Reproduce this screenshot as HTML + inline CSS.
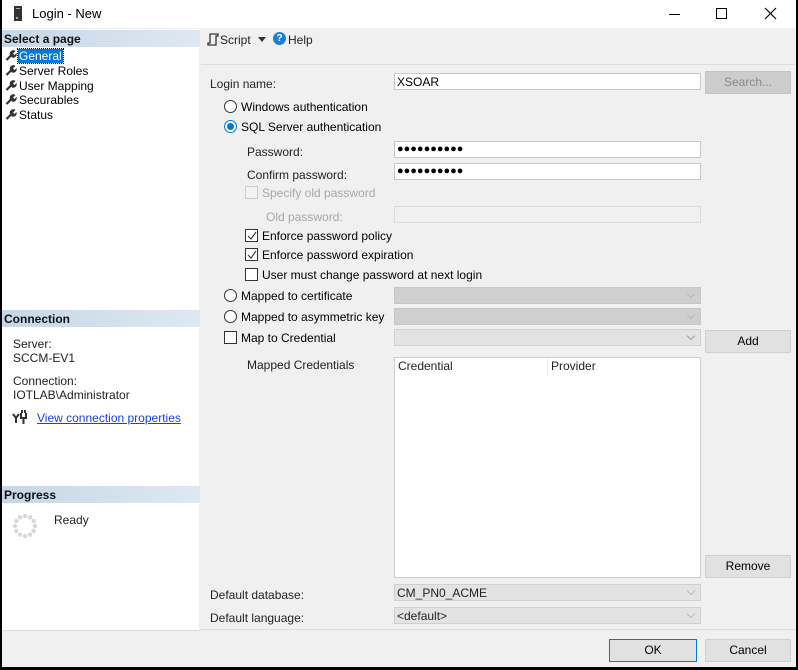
<!DOCTYPE html>
<html><head><meta charset="utf-8">
<style>
*{margin:0;padding:0;box-sizing:border-box}
body{width:798px;height:670px;background:#000;font-family:"Liberation Sans",Arial,sans-serif;font-size:12px;color:#000;position:relative;overflow:hidden}
.a{position:absolute}
#win{left:2px;top:0;width:794px;height:667px;background:#f0f0f0}
.hdr{position:absolute;left:0;width:198px;height:17px;background:linear-gradient(to right,#c7d6e6,#dfe8f2);font-weight:bold;font-size:12px;padding:2px 2px;color:#111}
.t{position:absolute;white-space:nowrap}
.inp{position:absolute;background:#fff;border:1px solid #c8c8c8;height:17px}
.dis{position:absolute;background:#f0f0f0;border:1px solid #dcdcdc;height:17px}
.cmb{position:absolute;background:#cfcfcf;border:1px solid #c6c6c6;height:17px}
.cmb2{position:absolute;background:#e3e3e3;border:1px solid #d0d0d0;height:17px}
.chev{position:absolute;right:6px;top:3px;width:6px;height:6px;border-right:1px solid #a0a0a0;border-bottom:1px solid #a0a0a0;transform:rotate(45deg)}
.btn{position:absolute;background:#e1e1e1;border:1px solid #d0d0d0;text-align:center;line-height:21px;height:23px}
.rad{position:absolute;width:13px;height:13px;border:1px solid #333;border-radius:50%;background:#fff}
.chk{position:absolute;width:13px;height:13px;border:1px solid #333;background:#fff}
.dots{letter-spacing:0px;font-size:11px}
</style></head><body>
<div id="win" class="a">
  <div class="a" style="left:0;top:0;width:794px;height:28px;background:#fff"></div>
  <div class="a" style="left:12px;top:6px;width:8px;height:15px;background:#333"></div>
  <div class="a" style="left:14px;top:8px;width:4px;height:1px;background:#aaa"></div>
  <div class="a" style="left:14px;top:17px;width:2px;height:2px;background:#aaa"></div>
  <div class="t" style="left:30px;top:6px;font-size:13px">Login - New</div>
  <div class="a" style="left:667px;top:14px;width:11px;height:1px;background:#000"></div>
  <div class="a" style="left:714px;top:8px;width:11px;height:11px;border:1px solid #000"></div>
  <svg class="a" style="left:762px;top:7px" width="13" height="13"><path d="M1 1L12 12M12 1L1 12" stroke="#000" stroke-width="1.2"/></svg>

  <div class="a" style="left:0;top:29px;width:197px;height:601px;background:#fff"></div>
  <div class="hdr" style="top:30px">Select a page</div>
  <svg class="a" style="left:3px;top:50px" width="12" height="11"><path d="M1.5 10L6 5.5" stroke="#333" stroke-width="2.2"/><path d="M5 5a3.5 3.5 0 0 1 5.5-4L8 3.5 9.5 5 11.5 3a3.5 3.5 0 0 1-4.5 4.5Z" fill="#333"/></svg>
  <div class="t" style="left:16px;top:49px;background:#0078d7;color:#fff;padding:0 1px;height:14px;line-height:14px;outline:1px dotted #000">General</div>
  <svg class="a" style="left:3px;top:65px" width="12" height="11"><path d="M1.5 10L6 5.5" stroke="#333" stroke-width="2.2"/><path d="M5 5a3.5 3.5 0 0 1 5.5-4L8 3.5 9.5 5 11.5 3a3.5 3.5 0 0 1-4.5 4.5Z" fill="#333"/></svg>
  <div class="t" style="left:17px;top:64px">Server Roles</div>
  <svg class="a" style="left:3px;top:80px" width="12" height="11"><path d="M1.5 10L6 5.5" stroke="#333" stroke-width="2.2"/><path d="M5 5a3.5 3.5 0 0 1 5.5-4L8 3.5 9.5 5 11.5 3a3.5 3.5 0 0 1-4.5 4.5Z" fill="#333"/></svg>
  <div class="t" style="left:17px;top:79px">User Mapping</div>
  <svg class="a" style="left:3px;top:94px" width="12" height="11"><path d="M1.5 10L6 5.5" stroke="#333" stroke-width="2.2"/><path d="M5 5a3.5 3.5 0 0 1 5.5-4L8 3.5 9.5 5 11.5 3a3.5 3.5 0 0 1-4.5 4.5Z" fill="#333"/></svg>
  <div class="t" style="left:17px;top:93px">Securables</div>
  <svg class="a" style="left:3px;top:109px" width="12" height="11"><path d="M1.5 10L6 5.5" stroke="#333" stroke-width="2.2"/><path d="M5 5a3.5 3.5 0 0 1 5.5-4L8 3.5 9.5 5 11.5 3a3.5 3.5 0 0 1-4.5 4.5Z" fill="#333"/></svg>
  <div class="t" style="left:17px;top:108px">Status</div>

  <div class="hdr" style="top:310px">Connection</div>
  <div class="t" style="left:11px;top:337px;color:#222">Server:</div>
  <div class="t" style="left:11px;top:351px;color:#222">SCCM-EV1</div>
  <div class="t" style="left:11px;top:374px;color:#222">Connection:</div>
  <div class="t" style="left:11px;top:388px;color:#222">IOTLAB\Administrator</div>
  <svg class="a" style="left:10px;top:410px" width="16" height="14"><path d="M1 4l3 4v5M7 4l-3 4M9 3v5h5V3M10 3V0M13 3V0M11.5 8v6" stroke="#333" stroke-width="2" fill="none"/></svg>
  <div class="t" style="left:35px;top:411px;text-decoration:underline;color:#1a3ee0">View connection properties</div>

  <div class="hdr" style="top:486px">Progress</div>
  <svg class="a" style="left:10px;top:513px" width="26" height="26">
    <g fill="#d8d8d8">
    <circle cx="13" cy="3" r="2.2"/><circle cx="18" cy="4.3" r="2.2"/><circle cx="21.7" cy="8" r="2.2"/><circle cx="23" cy="13" r="2.2"/><circle cx="21.7" cy="18" r="2.2"/><circle cx="18" cy="21.7" r="2.2"/><circle cx="13" cy="23" r="2.2"/><circle cx="8" cy="21.7" r="2.2"/><circle cx="4.3" cy="18" r="2.2"/><circle cx="3" cy="13" r="2.2"/><circle cx="4.3" cy="8" r="2.2"/><circle cx="8" cy="4.3" r="2.2"/></g></svg>
  <div class="t" style="left:52px;top:513px;color:#222">Ready</div>

  <svg class="a" style="left:204px;top:33px" width="13" height="13"><path d="M4 1h8v2h-2v9H2v-2h2Z" stroke="#333" stroke-width="1.3" fill="none"/></svg>
  <div class="t" style="left:218px;top:33px;color:#222">Script</div>
  <svg class="a" style="left:256px;top:37px" width="8" height="5"><path d="M0 0h8L4 5Z" fill="#333"/></svg>
  <div class="a" style="left:271px;top:32px;width:13px;height:13px;border-radius:50%;background:#1c7fd6;color:#fff;font-size:10px;font-weight:bold;text-align:center;line-height:13px">?</div>
  <div class="t" style="left:286px;top:33px;color:#222">Help</div>
  <div class="a" style="left:199px;top:64px;width:595px;height:1px;background:#dcdcdc"></div>

  <div class="t" style="left:208px;top:77px;color:#222">Login name:</div>
  <div class="inp" style="left:392px;top:73px;width:307px"><span class="t" style="left:2px;top:1px">XSOAR</span></div>
  <div class="btn" style="left:703px;top:71px;width:86px;background:#cccccc;color:#8a8a8a;border-color:#c4c4c4">Search...</div>

  <div class="rad" style="left:222px;top:100px"></div>
  <div class="t" style="left:239px;top:100px">Windows authentication</div>
  <div class="rad" style="left:222px;top:120px;border-color:#0078d7"><div class="a" style="left:2px;top:2px;width:7px;height:7px;border-radius:50%;background:#0078d7"></div></div>
  <div class="t" style="left:239px;top:120px">SQL Server authentication</div>

  <div class="t" style="left:245px;top:145px;color:#222">Password:</div>
  <div class="inp" style="left:392px;top:141px;width:307px"><span class="t dots" style="left:2px;top:1px">●●●●●●●●●●</span></div>
  <div class="t" style="left:245px;top:168px;color:#222">Confirm password:</div>
  <div class="inp" style="left:392px;top:163px;width:307px"><span class="t dots" style="left:2px;top:1px">●●●●●●●●●●</span></div>

  <div class="chk" style="left:243px;top:186px;border-color:#ccc;background:#f3f3f3"></div>
  <div class="t" style="left:260px;top:186px;color:#a8a8a8">Specify old password</div>
  <div class="t" style="left:264px;top:210px;color:#a8a8a8">Old password:</div>
  <div class="dis" style="left:392px;top:206px;width:307px"></div>

  <div class="chk" style="left:243px;top:229px"><svg class="a" style="left:1px;top:1px" width="10" height="10"><path d="M1 5l3 3 5-7" stroke="#333" stroke-width="1.1" fill="none"/></svg></div>
  <div class="t" style="left:260px;top:229px">Enforce password policy</div>
  <div class="chk" style="left:243px;top:248px"><svg class="a" style="left:1px;top:1px" width="10" height="10"><path d="M1 5l3 3 5-7" stroke="#333" stroke-width="1.1" fill="none"/></svg></div>
  <div class="t" style="left:260px;top:248px">Enforce password expiration</div>
  <div class="chk" style="left:243px;top:268px"></div>
  <div class="t" style="left:260px;top:268px">User must change password at next login</div>

  <div class="rad" style="left:222px;top:289px"></div>
  <div class="t" style="left:239px;top:289px">Mapped to certificate</div>
  <div class="cmb" style="left:392px;top:287px;width:307px"><div class="chev" style="border-color:#bbb"></div></div>
  <div class="rad" style="left:222px;top:310px"></div>
  <div class="t" style="left:239px;top:310px">Mapped to asymmetric key</div>
  <div class="cmb" style="left:392px;top:308px;width:307px"><div class="chev" style="border-color:#bbb"></div></div>
  <div class="chk" style="left:222px;top:331px"></div>
  <div class="t" style="left:239px;top:331px">Map to Credential</div>
  <div class="cmb2" style="left:392px;top:329px;width:307px"><div class="chev"></div></div>
  <div class="btn" style="left:703px;top:330px;width:86px">Add</div>

  <div class="t" style="left:245px;top:358px;color:#222">Mapped Credentials</div>
  <div class="a" style="left:392px;top:357px;width:307px;height:221px;background:#fff;border:1px solid #d0d0d0"></div>
  <div class="t" style="left:396px;top:359px;color:#222">Credential</div>
  <div class="a" style="left:545px;top:358px;width:1px;height:18px;background:#eee"></div>
  <div class="t" style="left:549px;top:359px;color:#222">Provider</div>
  <div class="btn" style="left:703px;top:555px;width:86px">Remove</div>

  <div class="t" style="left:208px;top:588px;color:#222">Default database:</div>
  <div class="cmb2" style="left:392px;top:584px;width:307px"><span class="t" style="left:2px;top:1px;color:#222">CM_PN0_ACME</span><div class="chev" style="border-color:#bbb"></div></div>
  <div class="t" style="left:208px;top:611px;color:#222">Default language:</div>
  <div class="cmb2" style="left:392px;top:607px;width:307px"><span class="t" style="left:2px;top:1px;color:#222">&lt;default&gt;</span><div class="chev" style="border-color:#bbb"></div></div>

  <div class="a" style="left:199px;top:629px;width:595px;height:1px;background:#dcdcdc"></div>
  <div class="a" style="left:0;top:630px;width:199px;height:1px;background:#dcdcdc"></div>
  <div class="btn" style="left:607px;top:639px;width:88px;border-color:#0078d7">OK</div>
  <div class="btn" style="left:703px;top:639px;width:86px">Cancel</div>
</div>
</body></html>
